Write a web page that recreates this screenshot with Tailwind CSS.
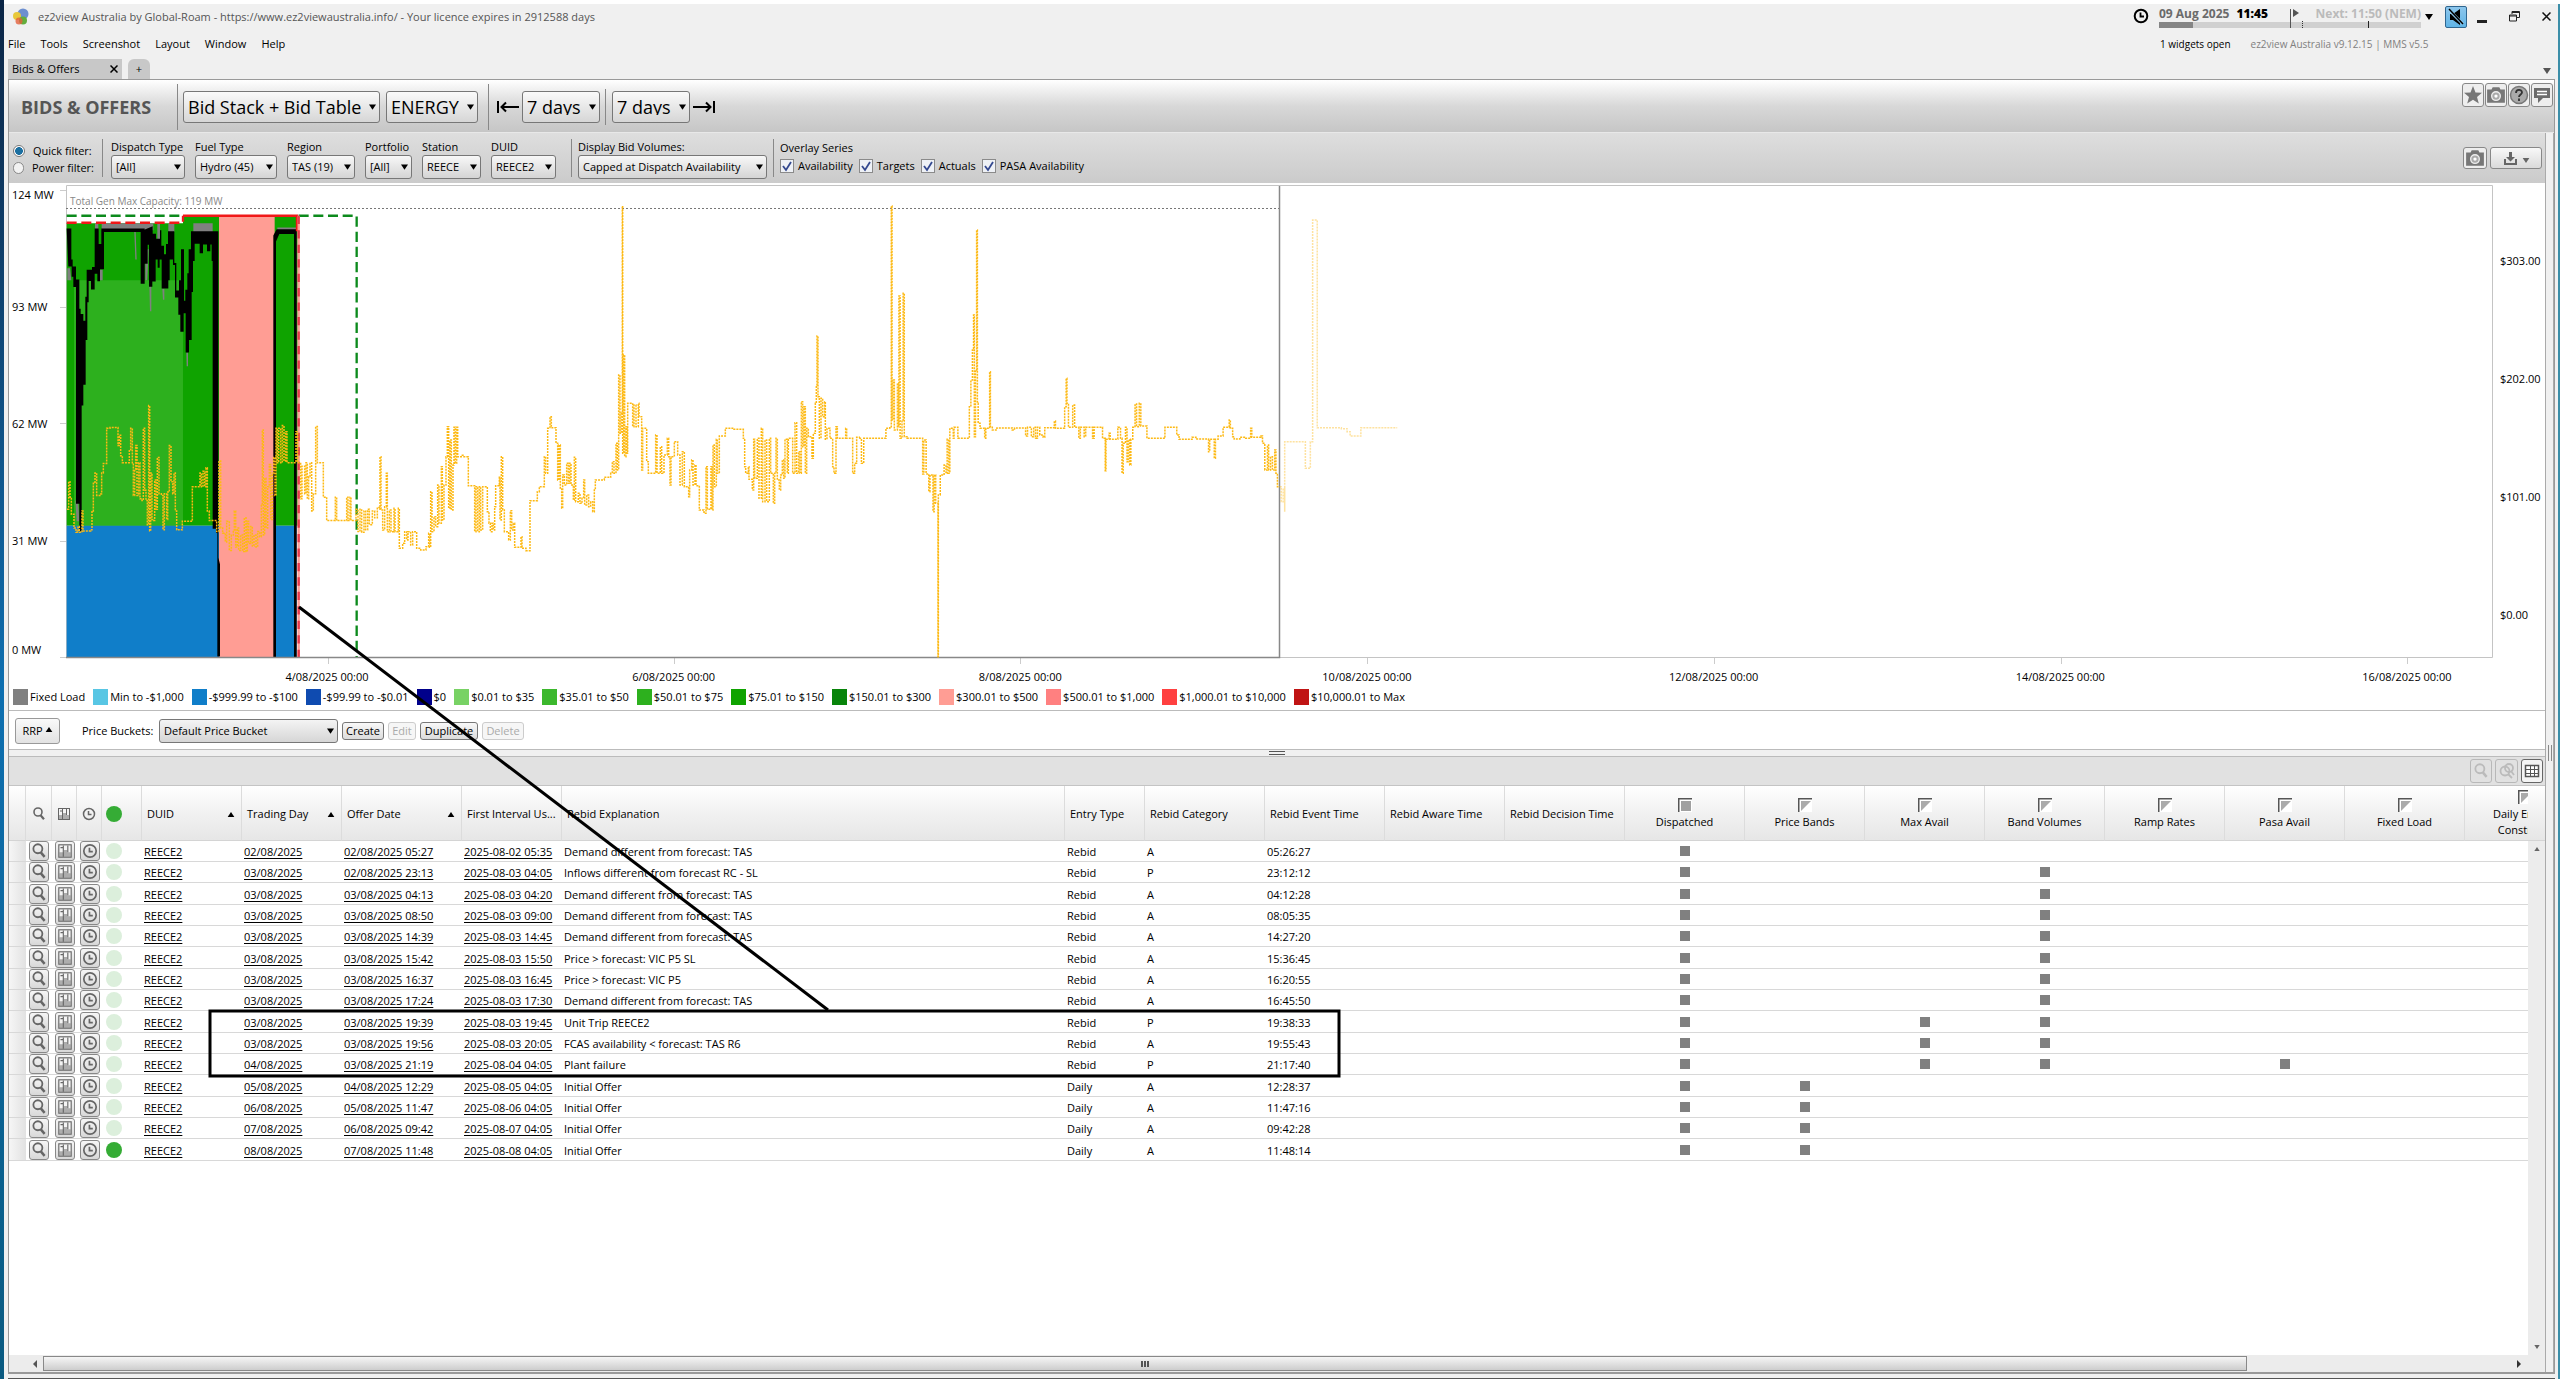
<!DOCTYPE html>
<html lang="en">
<head>
    <meta charset="UTF-8">
    <meta name="viewport" content="width=device-width, initial-scale=1.0">
    <title>ez2view Australia - Bids &amp; Offers</title>
    <script src="https://cdn.jsdelivr.net/npm/@tailwindcss/browser@4"></script>
</head>
<body class="relative flex h-screen overflow-hidden bg-white font-['Open_Sans',sans-serif] text-[11px] leading-4 text-black">

    <!-- icon sprite -->
    <svg class="hidden">
        <symbol id="caret" viewBox="0 0 8 6"><path d="M0 0h8L4 6z"/></symbol>
        <symbol id="caret-up" viewBox="0 0 8 6"><path d="M0 6h8L4 0z"/></symbol>
        <symbol id="magnifier" viewBox="0 0 16 16"><circle cx="7" cy="6" r="4" fill="none" stroke="currentColor" stroke-width="1.6"/><path d="M9.6 9.2l3.4 4" stroke="currentColor" stroke-width="2.2"/></symbol>
        <symbol id="bars" viewBox="0 0 16 16"><rect x="2.5" y="2.500" width="11" height="11" fill="#f4f4f4" stroke="currentColor"/><path d="M3 9h4v4H3zM7 7h3v6H7zM10 9h3v4h-3z" fill="currentColor" opacity=".5"/><path d="M6.500 3v10M10.500 3v6M4 5h2" stroke="currentColor"/></symbol>
        <symbol id="clock" viewBox="0 0 16 16"><circle cx="8" cy="8" r="5.500" fill="none" stroke="currentColor" stroke-width="1.500"/><path d="M7.500 5v3.500h3" fill="none" stroke="currentColor" stroke-width="1.500"/></symbol>
        <symbol id="camera" viewBox="0 0 18 18"><path fill-rule="evenodd" d="M1 4h4l1-2h6l1 2h4v12H1zM9 5.500a4.500 4.500 0 100 9 4.500 4.500 0 000-9z"/><circle cx="9" cy="10" r="3.300" fill="#aaa"/><circle cx="9" cy="10" r="1.500" fill="#fff"/></symbol>
        <symbol id="corner" viewBox="0 0 14 14"><path fill="#fff" d="M0 0h14v14H0z"/><path d="M3 3h10L3 13z" fill="#aaa"/><path d="M.75 14V.75H14" fill="none" stroke="#555" stroke-width="1.500"/></symbol>
        <symbol id="corner-full" viewBox="0 0 14 14"><path fill="#fff" d="M0 0h14v14H0z"/><path d="M3 3h10v10H3z" fill="#a0a0a0"/><path d="M.75 14V.75H14" fill="none" stroke="#555" stroke-width="1.500"/></symbol>
    </svg>

    <div class="w-1 shrink-0 bg-linear-to-b from-[#0b2545] via-[#0e6fb0] to-[#0a5a80]"></div>

    <div class="mt-1 flex min-w-0 flex-1 flex-col border-r-2 border-[#3b8ea8] bg-[#f0f0f0] pr-[3px] pl-1">

        <!-- title, menu and tabs -->
        <header class="flex h-[75px] shrink-0 justify-between">
            <div class="flex flex-col">
                <div class="flex h-[26px] items-center gap-2 pl-1 text-[#555]">
                    <svg class="size-[18px]" viewBox="0 0 18 18"><circle cx="11" cy="6" r="5.500" fill="#6d8fd0"/><circle cx="5" cy="8" r="4" fill="#e7c83b"/><circle cx="11" cy="12.500" r="4" fill="#63ad3c"/><circle cx="7" cy="13" r="3.500" fill="#e4603c" opacity=".8"/></svg>
                    <span>ez2view Australia by Global-Roam - https://www.ez2viewaustralia.info/ - Your licence expires in 2912588 days</span>
                </div>
                <nav class="flex h-[28px] items-center gap-[15px]">
                    <button>File</button><button>Tools</button><button>Screenshot</button><button>Layout</button><button>Window</button><button>Help</button>
                </nav>
                <div class="flex flex-1 items-stretch gap-1.5 pt-px">
                    <div class="flex w-[114px] items-center justify-between bg-[#c8c8c8] pr-1 pl-1">
                        <span>Bids &amp; Offers</span>
                        <button aria-label="Close tab"><svg class="size-2" viewBox="0 0 8 8"><path d="M.5.5l7 7M7.500.5l-7 7" stroke="#000" stroke-width="1.500"/></svg></button>
                    </div>
                    <button class="w-[22px] rounded-t-md bg-[#c8c8c8]">+</button>
                </div>
            </div>
            <div class="flex flex-col">
                <div class="flex items-start">
                    <svg class="mt-1 mr-2.5 size-4" viewBox="0 0 16 16"><circle cx="8" cy="8" r="6.300" fill="none" stroke="#000" stroke-width="2"/><path d="M7.500 4.500v4h3.500" fill="none" stroke="#000" stroke-width="1.800"/></svg>
                    <div class="relative w-[262px]">
                        <div class="flex h-[18px] items-end justify-between font-bold text-[#bbb]">
                            <span class="text-[12px] text-[#6b6b6b]">09 Aug 2025 <b class="ml-1 text-black">11:45</b></span>
                            <span class="text-[12px]">Next: 11:50 (NEM)</span>
                        </div>
                        <div class="h-[6px] bg-[#d0d0d0]"><div class="h-full w-[34px] bg-[#858585]"></div></div>
                        <svg class="absolute inset-0 h-6 w-full" viewBox="0 0 262 24"><path d="M131.500 5v19" stroke="#555"/><path d="M134 5l6 4-6 4z" fill="#555"/><path d="M143.500 17v7" stroke="#333" stroke-dasharray="1 1"/><path d="M209.500 17v7" stroke="#222"/></svg>
                    </div>
                    <svg class="mt-2.5 mr-3 ml-1 h-1.5 w-2"><use href="#caret"/></svg>
                    <button aria-label="Mute" class="mt-0.5 mr-2.5 rounded-xs border border-[#2f6690] bg-linear-to-b from-[#8cc6ec] to-[#5fb4e6] p-px">
                        <svg class="size-[18px]" viewBox="0 0 18 18"><path d="M3 6h3l7-5v16l-7-5H3z"/><path d="M2 2l14 14" stroke="#8cc6ec" stroke-width="3"/><path d="M2 1l14 15" stroke="#000" stroke-width="1.500"/></svg>
                    </button>
                    <button aria-label="Minimise" class="mt-4 mr-[22px] h-[3px] w-[10px] bg-[#222]"></button>
                    <button aria-label="Restore" class="mt-[7px] mr-[22px]"><svg class="size-[11px]" viewBox="0 0 11 11" fill="none" stroke="#222"><path d="M.5 4h7v6h-7zM.5 5h7M3 3V.5h7.500v6H8M3 1.500h7"/></svg></button>
                    <button aria-label="Close" class="mt-2 mr-1"><svg class="size-[9px]" viewBox="0 0 9 9"><path d="M.5.5l8 8M8.500.5l-8 8" stroke="#111" stroke-width="1.500"/></svg></button>
                </div>
                <div class="mt-2 flex gap-5 pl-[27px] text-[10px]">
                    <span>1 widgets open</span><span class="text-[#808080]">ez2view Australia v9.12.15 | MMS v5.5</span>
                </div>
                <svg class="mt-auto mr-1 mb-[5px] h-1.5 w-2 self-end" fill="#555"><use href="#caret"/></svg>
            </div>
        </header>

        <main class="flex min-h-0 flex-1 flex-col border border-b-2 border-[#999]">

            <!-- widget header -->
            <div class="flex h-[53px] shrink-0 items-center border-b border-[#e8e8e8] bg-linear-to-b from-white via-[#d8d8d8] to-[#c6c6c6] pt-px pl-3 text-[18px]">
                <h1 class="w-[156px] text-[18px] font-bold text-[#555]">BIDS &amp; OFFERS</h1>
                <div class="mr-[5px] h-[46px] w-px bg-[#888]"></div>
                <div class="relative mr-1.5">
                    <select aria-label="View" class="h-8 w-[197px] appearance-none rounded-[3px] border border-[#777] bg-linear-to-b from-[#fafafa] to-[#d6d6d6] px-1"><option>Bid Stack + Bid Table</option></select>
                    <svg class="pointer-events-none absolute top-[13px] right-1 h-1.5 w-[7px]"><use href="#caret"/></svg>
                </div>
                <div class="relative mr-[10px]">
                    <select aria-label="Market" class="h-8 w-[92px] appearance-none rounded-[3px] border border-[#777] bg-linear-to-b from-[#fafafa] to-[#d6d6d6] px-1"><option>ENERGY</option></select>
                    <svg class="pointer-events-none absolute top-[13px] right-1 h-1.5 w-[7px]"><use href="#caret"/></svg>
                </div>
                <div class="mr-2 h-[46px] w-px bg-[#888]"></div>
                <button aria-label="Back" class="mr-[3px]"><svg class="h-3 w-[22px]" viewBox="0 0 22 12" fill="none" stroke="#000" stroke-width="2"><path d="M1 0v12M4 6h18M9 1.500L4.500 6 9 10.500"/></svg></button>
                <div class="relative mr-[5px]">
                    <select aria-label="Days before" class="h-8 w-[78px] appearance-none rounded-[3px] border border-[#777] bg-linear-to-b from-[#fafafa] to-[#d6d6d6] px-1"><option>7 days</option></select>
                    <svg class="pointer-events-none absolute top-[13px] right-1 h-1.5 w-[7px]"><use href="#caret"/></svg>
                </div>
                <div class="mr-1.5 h-9 w-px bg-[#888]"></div>
                <div class="relative mr-[3px]">
                    <select aria-label="Days after" class="h-8 w-[78px] appearance-none rounded-[3px] border border-[#777] bg-linear-to-b from-[#fafafa] to-[#d6d6d6] px-1"><option>7 days</option></select>
                    <svg class="pointer-events-none absolute top-[13px] right-1 h-1.5 w-[7px]"><use href="#caret"/></svg>
                </div>
                <button aria-label="Forward"><svg class="h-3 w-[22px]" viewBox="0 0 22 12" fill="none" stroke="#000" stroke-width="2"><path d="M21 0v12M18 6H0M13 1.500L17.500 6 13 10.500"/></svg></button>

                <div class="mt-0.5 mr-px ml-auto flex gap-px self-start text-[#777]">
                    <button aria-label="Favourite" class="rounded-[3px] border border-[#888] bg-[#eee] py-px"><svg class="size-5" viewBox="0 0 20 20" fill="currentColor"><path d="M10 1l2.500 6.500 6.500.2-5 4.200 1.800 6.600L10 14.700l-5.800 3.800L6 11.900 1 7.700l6.500-.2z"/></svg></button>
                    <button aria-label="Snapshot" class="rounded-[3px] border border-[#888] bg-[#eee] py-px"><svg class="size-5" fill="currentColor"><use href="#camera"/></svg></button>
                    <button aria-label="Help" class="rounded-[3px] border border-[#888] bg-[#eee] py-px"><svg class="size-5" viewBox="0 0 20 20"><circle cx="10" cy="10" r="8.500" fill="#aaa" stroke="#777" stroke-width="1.500"/><path d="M7 8c0-4 6-4 6-.5 0 2-3 2-3 4.500M10 13.500V16" fill="none" stroke="#333" stroke-width="1.800"/></svg></button>
                    <button aria-label="Comments" class="rounded-[3px] border border-[#888] bg-[#eee] py-px"><svg class="size-5" viewBox="0 0 20 20"><path d="M2 3h16v10h-7l-5 5v-5H2z" fill="#6c6c6c"/><path d="M5 6.500h10M5 9.500h10" stroke="#fff" stroke-width="1.500"/></svg></button>
                </div>
            </div>

            <div class="flex min-h-0 flex-1">
                <div class="flex min-w-0 flex-1 flex-col bg-white">

                    <!-- filters -->
                    <div class="flex h-[50px] shrink-0 items-start bg-linear-to-b from-[#dedede] to-[#cbcbcb] pt-1.5 pl-1">
                        <div class="mr-2 flex w-[81px] flex-col gap-px pt-1 whitespace-nowrap">
                            <label class="flex items-center gap-2"><input type="radio" name="filter" checked class="size-3 appearance-none rounded-full border border-[#777] bg-white bg-radial from-[#1b6fa0] from-50% to-white to-60%">Quick filter:</label>
                            <label class="flex items-center gap-2"><input type="radio" name="filter" class="size-3 appearance-none rounded-full border border-[#888] bg-[#f2f2f2]">Power filter:</label>
                        </div>
                        <div class="mr-2 h-[38px] w-px bg-[#888]"></div>
                        <div class="flex gap-[10px]">
                            <label class="relative flex flex-col">Dispatch Type
                                <select class="h-6 w-[74px] appearance-none rounded-[3px] border border-[#777] bg-linear-to-b from-[#f8f8f8] to-[#d4d4d4] px-1"><option>[All]</option></select>
                                <svg class="pointer-events-none absolute right-1 bottom-[9px] h-1.5 w-[7px]"><use href="#caret"/></svg></label>
                            <label class="relative flex flex-col">Fuel Type
                                <select class="h-6 w-[82px] appearance-none rounded-[3px] border border-[#777] bg-linear-to-b from-[#f8f8f8] to-[#d4d4d4] px-1"><option>Hydro (45)</option></select>
                                <svg class="pointer-events-none absolute right-1 bottom-[9px] h-1.5 w-[7px]"><use href="#caret"/></svg></label>
                            <label class="relative flex flex-col">Region
                                <select class="h-6 w-[68px] appearance-none rounded-[3px] border border-[#777] bg-linear-to-b from-[#f8f8f8] to-[#d4d4d4] px-1"><option>TAS (19)</option></select>
                                <svg class="pointer-events-none absolute right-1 bottom-[9px] h-1.5 w-[7px]"><use href="#caret"/></svg></label>
                            <label class="relative flex flex-col">Portfolio
                                <select class="h-6 w-[47px] appearance-none rounded-[3px] border border-[#777] bg-linear-to-b from-[#f8f8f8] to-[#d4d4d4] px-1"><option>[All]</option></select>
                                <svg class="pointer-events-none absolute right-1 bottom-[9px] h-1.5 w-[7px]"><use href="#caret"/></svg></label>
                            <label class="relative flex flex-col">Station
                                <select class="h-6 w-[59px] appearance-none rounded-[3px] border border-[#777] bg-linear-to-b from-[#f8f8f8] to-[#d4d4d4] px-1"><option>REECE</option></select>
                                <svg class="pointer-events-none absolute right-1 bottom-[9px] h-1.5 w-[7px]"><use href="#caret"/></svg></label>
                            <label class="relative flex flex-col">DUID
                                <select class="h-6 w-[65px] appearance-none rounded-[3px] border border-[#777] bg-linear-to-b from-[#f8f8f8] to-[#d4d4d4] px-1"><option>REECE2</option></select>
                                <svg class="pointer-events-none absolute right-1 bottom-[9px] h-1.5 w-[7px]"><use href="#caret"/></svg></label>
                        </div>
                        <div class="mr-1.5 ml-[15px] h-[38px] w-px bg-[#888]"></div>
                        <label class="relative flex flex-col">Display Bid Volumes:
                            <select class="h-6 w-[189px] appearance-none rounded-[3px] border border-[#777] bg-linear-to-b from-[#f8f8f8] to-[#d4d4d4] px-1"><option>Capped at Dispatch Availability</option></select>
                            <svg class="pointer-events-none absolute right-1 bottom-[9px] h-1.5 w-[7px]"><use href="#caret"/></svg></label>
                        <div class="mr-1.5 ml-1.5 h-[38px] w-px bg-[#888]"></div>
                        <fieldset>
                            <legend class="pt-px">Overlay Series</legend>
                            <div id="overlays" class="flex gap-1.5 pt-0.5"></div>
                        </fieldset>
                        <div class="mt-2 mr-[3px] ml-auto flex gap-[3px] text-[#777]">
                            <button aria-label="Chart snapshot" class="h-[22px] rounded-[3px] border border-[#888] bg-[#eee] px-px"><svg class="size-5" fill="currentColor"><use href="#camera"/></svg></button>
                            <button aria-label="Download" class="flex h-[22px] w-[52px] items-center justify-center gap-1 rounded-[3px] border border-[#888] bg-linear-to-b from-[#f8f8f8] to-[#dadada]"><svg class="size-[15px]" viewBox="0 0 15 15" fill="#666"><path d="M6 1h3v5h3L7.500 10.500 3 6h3zM1 8h2v4h9V8h2v6H1z"/></svg><svg class="mt-1 h-[5px] w-2" fill="#666"><use href="#caret"/></svg></button>
                        </div>
                    </div>

                    <!-- bid stack chart -->
                    <section class="flex shrink-0 flex-col border-b border-[#bbb] pt-0.5">
                        <div class="flex">
                            <div class="flex w-[57px] flex-col pl-[3px] leading-5">
                                <span>124 MW</span><span class="mt-[92px]">93 MW</span><span class="mt-[97px]">62 MW</span><span class="mt-[97px]">31 MW</span><span class="mt-[89px]">0 MW</span>
                            </div>
                            <div class="relative h-[482px] min-w-0 flex-1">
                                <span class="absolute top-2 left-1 text-[10px] text-[#888]">Total Gen Max Capacity: 119 MW</span>
                                <svg class="h-full w-full overflow-visible" viewBox="66 185 2427 482" preserveAspectRatio="none" fill="none">
                                    <path d="M66.500 657.500V185.500H2492.500V657.500H66" stroke="#c4c4c4"/>
                                    <path d="M60 190.500h6M60 307.500h6M60 423.500h6M60 541.500h6M60 657.500h6M328.500 658v6M674.500 658v6M1020.500 658v6M1367.500 658v6M1714.500 658v6M2061.500 658v6M2407.500 658v6" stroke="#ccc"/>
                                    <path d="M66 208.500H1279" stroke="#777" stroke-dasharray="2 2"/>
                                    <g transform="translate(0 170) scale(.33333 .34435)">
                                        <!-- volume bands -->
                                        <path fill="#0fa300" d="M200 155h349V133h344V1033H200z"/>
                                        <path fill="#2db01e" d="M222 320h327V1033H222z"/>
                                        <path fill="#107ec9" d="M200 1033h690V1414H200z"/>
                                        <path fill="#ff9d94" d="M657 134h167V1414H657z"/>
                                        <!-- targets -->
                                        <path fill="#808080" d="M285 155h10v20h-10zM305 155h155v20H305zM472 155h8v50h-8zM505 155h18v25h-18zM580 155h58v25h-58zM832 167h56v12h-56zM403 180h4l3 80h-4zM436 230h10l-4 90h-6zM448 330h6v80h-4zM487 345h6v32h-4zM559 530h5v40h-4zM202 285h8l4 35h-12zM300 290h8v30h-8zM226 960h8l4 60h-8z"/>
                                        <!-- actuals -->
                                        <path fill="#000" d="M200 170h14v90h4v20h10v38h10v85h4v15h8v20h6v-70h4v-78h16v-8h8V170h12v45h8v-45h130v10H312v108h-12v35h-8v-22h-8v46h-11v-25h-7v62h-4v110h-5v130h-7v60h-5v365h-7v-80h-10V340h-8v-30h-5v-30h-10z"/>
                                        <path fill="#000" d="M422 178v152h12v-58h9v-55h4v122h10v-15h10v-64h6v24h6v-24h6v84h20v-24h4v-60h10v16h6v94h10v50h6v50h10v-54h6v114h10v-36h8v-140h4v-90h5v-50h15v28h10v-26h12v20h10v-20h4v48h3v778h10v12h4v359h8V1145l-5-20V178h-82v52h-7v70h-4v48h-6v32h-4V230h-9v90h-6v30h-8v-80h-6v-92h-19v37h-6v30h-6v-25h-8v-45h-4v25h-12v-15h-10v-22z"/>
                                        <path fill="#000" d="M820 190l10-18h60V1414h-8V186h-44l-10 22V1414h-8z"/>
                                        <!-- availability and PASA -->
                                        <g stroke-width="7">
                                            <path d="M200 133h349M896 133h174V1414" stroke="#0c8a1c" stroke-dasharray="30 14"/>
                                            <path d="M200 153h349v-20" stroke="#f01818" stroke-dasharray="30 14"/>
                                            <path d="M549 133h342v45" stroke="#f01818"/>
                                            <path d="M896 133v1281" stroke="#ff9d94"/>
                                            <path d="M896 133v1281" stroke="#e8384a" stroke-dasharray="24 18"/>
                                        </g>
                                    </g>
                                    <path d="M66 657.500H1279.500V186" stroke="#888" stroke-width="1.500"/>
                                    <!-- RRP -->
                                    <g stroke="#fdb913" stroke-width="1.500" stroke-dasharray="2 1">
                                        <path vector-effect="non-scaling-stroke" transform="translate(0 170) scale(.33333 .34435)" d="M201 985H206V905H210V950H214V1000H222V1040H228V1052H234V1035H238V1052H246V990H249V1048H272V1045H276V990H280V910H285V880H290V945H303V940H305V880H310V852H320V750H330V748H354V800H358V770H362V830H367V850H388V815H392V750H397V850H400V945H404V870H407V800H411V945H416V850H420V955H426V960H430V750H434V930H438V960H442V1030H446V684H449V1048H452V880H456V1015H461V1018H464V900H468V985H472V835H477V940H484V945H489V1045H493V940H500V1015H503V935H508V800H513V905H518V940H522V880H526V990H530V1045H547V1020H577V920H600V880H604V920H609V875H614V920H618V865H622V990H628V1018H650V1050H657V845H662V1040H668V1055H676V1080H680V1020H688V1105H694V1060H700V1050H703V990H707V1095H712V1040H716V1105H722V1060H728V1108H733V1010H738V1108H742V1020H746V1085H752V1035H757V1092H762V1060H768V1095H773V1050H779V1065H784V970H787V755H790V1060H794V895H798V1040H803V920H808V855H812V1015H817V880H821V835H825V945H828V750H832V850H836V750H842V850H847V742H852V845H857V760H861V850H888V760H893V850H902V955H906V860H914V940H918V850H922V955H926V890H930V850H935V990H940V940H947V745H952V850H970V950H980V1018H1006V950H1010V1018H1040V950H1044V1018H1050V950H1053V1018H1068V985H1074V1050H1080V985H1085V1052H1092V990H1097V1045H1103V985H1108V1030H1117V990H1124V1010H1132V980H1140"/>
                                        <path vector-effect="non-scaling-stroke" transform="translate(380 190) scale(.33333)" d="M0 960V800H3V960H8V1020H14V950H19V850H22V1025H28V960H33V1025H42V955H45V1025H55V955H58V1075H68V1060H74V1025H80V1050H84V1025H92V1065H98V1025H110V1075H122V1080H138V1070H146V1030H149V1072H152V905H156V1025H162V980H167V1010H173V885H177V1000H184V830H187V990H192V885H198V800H202V710H206V955H210V750H214V960H219V825H222V712H226V820H230V712H233V800H247V796H252V800H265V887H284V1025H288V890H293V1025H298V890H302V1020H308V890H322V965H327V1000H331V1025H336V1000H340V1020H344V950H347V887H358V862H360V990H364V800H368V960H373V1025H386V1050H391V962H395V1020H400V1000H404V1072H423V1040H426V1075H438V1082H450V932H472V905H478V890H493V800H497V850H503V715H510V680H514V713H528V760H533V870H537V765H541V895H545V955H548V855H553V885H560V820H565V880H569V820H573V885H580V930H583V802H587V935H595V910H600V940H606V925H611V870H614V945H620V915H626V950H632V935H638V965H643V900H646V870H673V862H692V850H697V815H702V850H708V760H712V840H716V555H720V730H724V670H727V48H728V790H731V495H734V800H738V710H741V790H743V640H758V710H762V645H768V710H775V640H777V680H785V840H788V715H800V815H805V850H827V735H831V850H841V770H845V850H852V795H862V745H866V800H870V885H873V800H883V755H893V795H900V885H907V785H913V890H926V920H929V840H935V810H939V885H945V825H948V887H958V960H972V970H978V830H982V958H993V830H996V960H999V765H1003V890H1009V748H1012V850H1018V738H1036V715H1062V718H1090V745H1094V830H1097V850H1105V830H1107V868H1117V900H1121V748H1124V865H1132V745H1137V925H1144V715H1148V935H1155V750H1160V935H1168V745H1172V850H1180V940H1184V850H1188V745H1192V870H1198V900H1202V855H1207V810H1211V865H1215V748H1222V850H1225V745H1238V850H1245V698H1250V850H1256V785H1260V850H1264V635H1268V770H1272V650H1276V850H1280V715H1285V740H1296V805H1300V730H1306V640H1309V585H1311V438H1314V620H1318V745H1323V625H1328V680H1334V635H1336V748H1341V715H1350V745H1358V830H1362V850H1368V710H1372V745H1397V715H1400V745H1418V850H1424V820H1430V742H1440"/>
                                        <path vector-effect="non-scaling-stroke" transform="translate(840 190) scale(.38270 .33333)" d="M50 745H56V820H62V745H120V715H130V710H134V48H136V690H139V570H142V720H150V580H152V710H154V318H157V745H162V690H165V310H168V740H175V745H216V852H219V750H225V852H232V905H235V855H243V965H246V855H250V940H256V1400H257V915H262V855H272V825H277V850H280V748H284V850H287V715H296V745H298V712H308V745H338V650H342V570H346V480H349V375H351V740H354V540H357V120H359V640H361V700H366V715H378V745H381V715H391V545H393V712H398V720H410V714H450V720H456V714H485V738H490V712H500V740H506V712H511V745H516V712H522V735H531V742H535V713H560V693H563V715H587V650H591V565H593V640H597V712H608V645H613V712H624V745H628V712H638V740H642V712H660V745H664V712H686V745H693V842H695V748H703V730H706V748H726V712H733V745H737V850H740V760H746V712H750V815H753V750H757V825H760V748H765V712H771V642H775V710H782V640H786V708H802V745H849V712H880V735H886V748H920V742H930V747H963V785H966V748H978V805H981V748H988V738H1001V712H1017V690H1020V715H1026V740H1030V747H1045V742H1060V745H1073V715H1076V742H1100V738H1104V760H1110V840H1117V765H1120V840H1125V800H1130V840H1136V780H1139V850H1143V890H1148"/>
                                        <path opacity=".4" vector-effect="non-scaling-stroke" transform="translate(840 190) scale(.38270 .33333)" d="M1148 890H1153V935H1158V895H1162V965V755H1216V835H1229V755H1235V90H1247V713H1310V716H1325V725H1333V738H1361V713H1456"/>
                                    </g>
                                </svg>
                            </div>
                            <div class="flex w-[52px] flex-col gap-[98px] pt-[66px] pl-[7px] leading-5">
                                <span>$303.00</span><span>$202.00</span><span>$101.00</span><span>$0.00</span>
                            </div>
                        </div>
                        <div class="flex justify-between pr-[90px] pl-[270px] text-center leading-5">
                            <span class="w-24">4/08/2025 00:00</span><span class="w-24">6/08/2025 00:00</span><span class="w-24">8/08/2025 00:00</span><span class="w-24">10/08/2025 00:00</span><span class="w-24">12/08/2025 00:00</span><span class="w-24">14/08/2025 00:00</span><span class="w-24">16/08/2025 00:00</span>
                        </div>
                        <div id="legend" class="flex gap-2 pt-0.5 pb-[5px] pl-1"></div>
                    </section>

                    <!-- price buckets -->
                    <div class="flex h-[38px] shrink-0 items-center gap-1 pt-0.5 pl-1.5">
                        <button class="mr-[18px] flex h-[26px] w-[45px] items-center justify-center gap-0.5 rounded-[3px] border border-[#999] bg-linear-to-b from-[#fafafa] to-[#e2e2e2]">RRP<svg class="mb-1 h-[5px] w-2"><use href="#caret-up"/></svg></button>
                        <label for="bucket" class="w-[73px]">Price Buckets:</label>
                        <div class="relative">
                            <select id="bucket" class="h-6 w-[179px] appearance-none rounded-[3px] border border-[#777] bg-linear-to-b from-[#f4f4f4] to-[#d6d6d6] px-1"><option>Default Price Bucket</option></select>
                            <svg class="pointer-events-none absolute top-[9px] right-1 h-1.5 w-[7px]"><use href="#caret"/></svg>
                        </div>
                        <button class="h-[18px] w-[42px] rounded-[3px] border border-[#777] bg-linear-to-b from-[#f8f8f8] to-[#dcdcdc]">Create</button>
                        <button disabled class="h-[18px] w-[28px] rounded-[3px] border border-[#ccc] bg-[#f6f6f6] text-[#aaa]">Edit</button>
                        <button class="h-[18px] w-[58px] rounded-[3px] border border-[#777] bg-linear-to-b from-[#f8f8f8] to-[#dcdcdc]">Duplicate</button>
                        <button disabled class="h-[18px] w-[42px] rounded-[3px] border border-[#ccc] bg-[#f6f6f6] text-[#aaa]">Delete</button>
                    </div>
                    <div class="flex h-2 shrink-0 items-center justify-center border-y border-[#bbb] bg-[#f0f0f0]"><div class="h-1 w-4 border-y border-[#555]"></div></div>
                    <div class="flex h-[29px] shrink-0 items-center justify-end gap-[3px] border-b border-[#c4c4c4] bg-[#e1e1e1] pr-0.5">
                        <button disabled aria-label="Find" class="rounded-[3px] border border-[#b8b8b8] p-px text-[#bbb]"><svg class="h-5 w-[18px]"><use href="#magnifier"/></svg></button>
                        <button disabled aria-label="Find all" class="rounded-[3px] border border-[#b8b8b8] p-px text-[#bbb]"><svg class="h-5 w-[19px]" viewBox="0 0 19 20" fill="none" stroke="currentColor" stroke-width="1.800"><circle cx="8" cy="10" r="4.500"/><circle cx="12" cy="7" r="4"/><path d="M11 13l4 4M14 10l3 4"/></svg></button>
                        <button aria-label="Columns" class="rounded-[3px] border border-[#666] bg-[#f4f4f4] p-px"><svg class="h-5 w-[18px]" viewBox="0 0 18 20" fill="none" stroke="#555"><path d="M2.500 4.500h13v11h-13z" fill="#fff" stroke-width="1.500"/><path d="M3 8.500h12M3 12.500h12M7.500 5v10M11.500 5v10"/></svg></button>
                    </div>

                    <!-- offers -->
                    <div class="flex min-h-0 flex-1">
                        <div class="min-w-0 flex-1 overflow-hidden">
                            <table class="w-[2576px] table-fixed border-separate border-spacing-0 text-left whitespace-nowrap">
                                <colgroup>
                                    <col class="w-[17px]"><col class="w-[26px]"><col class="w-[25px]"><col class="w-[25px]"><col class="w-[40px]">
                                    <col class="w-[100px]"><col class="w-[100px]"><col class="w-[120px]"><col class="w-[100px]"><col class="w-[503px]"><col class="w-[80px]">
                                    <col class="w-[120px]"><col class="w-[120px]"><col class="w-[120px]"><col class="w-[120px]">
                                    <col class="w-[120px]"><col class="w-[120px]"><col class="w-[120px]"><col class="w-[120px]"><col class="w-[120px]"><col class="w-[120px]"><col class="w-[120px]"><col class="w-[120px]">
                                </colgroup>
                                <thead><tr id="head" class="h-[55px] bg-linear-to-b from-white via-[#f1f1f1] to-[#e6e6e6]"></tr></thead>
                                <tbody id="rows"></tbody>
                            </table>
                        </div>
                        <div class="flex w-[17px] shrink-0 flex-col">
                            <div class="h-[55px] border-b border-[#d4d4d4] bg-linear-to-b from-white via-[#f1f1f1] to-[#e6e6e6]"></div>
                            <div class="flex flex-1 flex-col items-center justify-between bg-[#ececec] py-1.5">
                                <svg class="h-1 w-1.5" fill="#666"><use href="#caret-up"/></svg>
                                <svg class="h-1 w-1.5" fill="#666"><use href="#caret"/></svg>
                            </div>
                        </div>
                    </div>
                    <div class="flex h-[17px] shrink-0 items-center bg-[#ececec] pr-6 pl-6">
                        <svg class="mr-1.5 h-2 w-1" viewBox="0 0 4 8" fill="#555"><path d="M4 0v8L0 4z"/></svg>
                        <div class="mr-auto flex h-[15px] w-[88.6%] items-center justify-center gap-px border border-[#888] bg-linear-to-b from-[#f6f6f6] to-[#cdcdcd]">
                            <i class="h-1.5 w-0.5 bg-[#555]"></i><i class="h-1.5 w-0.5 bg-[#555]"></i><i class="h-1.5 w-0.5 bg-[#555]"></i>
                        </div>
                        <svg class="h-2 w-1" viewBox="0 0 4 8" fill="#333"><path d="M0 0v8l4-4z"/></svg>
                    </div>
                </div>
                <div class="flex w-[9px] shrink-0 items-center justify-center border-x border-[#aaa] bg-[#f0f0f0]"><div class="h-4 w-1 border-x border-[#888]"></div></div>
            </div>
        </main>
        <div class="h-[5px] shrink-0 border-b border-[#555]"></div>
    </div>

    <!-- call-out from the trip to its rebids -->
    <svg class="pointer-events-none absolute top-0 left-0 h-[1379px] w-[2560px]" fill="none" stroke="#000" stroke-width="3">
        <path d="M299 607L828 1010"/><rect x="210" y="1011" width="1129" height="65"/>
    </svg>

    <script>
        const overlays = ["Availability", "Targets", "Actuals", "PASA Availability"];
        document.getElementById("overlays").innerHTML = overlays.map((name) => `
            <label class="flex items-center gap-1"><span class="relative size-[14px]"><input type="checkbox" checked class="block size-[14px] appearance-none border border-[#8a8a8a] bg-[#eef1f6]">
            <svg class="pointer-events-none absolute inset-0 size-[14px]" viewBox="0 0 14 14"><path d="M3 7l3 4 5-8" fill="none" stroke="#33488f" stroke-width="1.800"/></svg></span>${name}</label>`).join("");

        const buckets = [
            ["#808080", "Fixed Load"], ["#58c6e4", "Min to -$1,000"], ["#107ec9", "-$999.99 to -$100"], ["#0f4bb0", "-$99.99 to -$0.01"],
            ["#00008b", "$0"], ["#78d264", "$0.01 to $35"], ["#3cb82d", "$35.01 to $50"], ["#2db01e", "$50.01 to $75"], ["#0fa300", "$75.01 to $150"],
            ["#08840a", "$150.01 to $300"], ["#ff9d94", "$300.01 to $500"], ["#ff8080", "$500.01 to $1,000"], ["#ff4040", "$1,000.01 to $10,000"], ["#c01414", "$10,000.01 to Max"]
        ];
        document.getElementById("legend").innerHTML = buckets.map(([colour, name]) =>
            `<span class="flex items-center"><i class="mr-0.5 h-4 w-[15px]" style="background:${colour}"></i>${name}</span>`).join("");

        const th = "border-r border-b border-r-[#dcdcdc] border-b-[#d4d4d4] pt-0.5 font-normal";
        const icon = (id) => `<th class="${th}"><svg class="mx-auto size-4 text-[#666]"><use href="#${id}"/></svg></th>`;
        const text = (name, sort) => `<th class="${th} pl-[5px]"><span class="flex items-center justify-between pr-1.5">${name}${sort ? '<svg class="h-[5px] w-2 shrink-0"><use href="#caret-up"/></svg>' : ""}</span></th>`;
        const flag = (name, id = "corner") => `<th class="${th} text-center"><svg class="mx-auto mb-0.5 size-[14px]"><use href="#${id}"/></svg>${name}</th>`;
        document.getElementById("head").innerHTML = `<th class="${th}"></th>` + icon("magnifier") + icon("bars") + icon("clock") +
            `<th class="${th}"><i class="ml-1 block size-4 rounded-full bg-[#35ac35]"></i></th>` +
            text("DUID", true) + text("Trading Day", true) + text("Offer Date", true) + text("First Interval Us...") + text("Rebid Explanation") +
            text("Entry Type") + text("Rebid Category") + text("Rebid Event Time") + text("Rebid Aware Time") + text("Rebid Decision Time") +
            flag("Dispatched", "corner-full") + ["Price Bands", "Max Avail", "Band Volumes", "Ramp Rates", "Pasa Avail", "Fixed Load", "Daily Energy<br>Constraint"].map((n) => flag(n)).join("");

        // trading day, offer date, first interval, explanation, type, category, event time, changed columns
        const offers = [
            ["02/08/2025", "02/08/2025 05:27", "2025-08-02 05:35", "Demand different from forecast: TAS", "Rebid", "A", "05:26:27", "D"],
            ["03/08/2025", "02/08/2025 23:13", "2025-08-03 04:05", "Inflows different from forecast RC - SL", "Rebid", "P", "23:12:12", "DB"],
            ["03/08/2025", "03/08/2025 04:13", "2025-08-03 04:20", "Demand different from forecast: TAS", "Rebid", "A", "04:12:28", "DB"],
            ["03/08/2025", "03/08/2025 08:50", "2025-08-03 09:00", "Demand different from forecast: TAS", "Rebid", "A", "08:05:35", "DB"],
            ["03/08/2025", "03/08/2025 14:39", "2025-08-03 14:45", "Demand different from forecast: TAS", "Rebid", "A", "14:27:20", "DB"],
            ["03/08/2025", "03/08/2025 15:42", "2025-08-03 15:50", "Price &gt; forecast: VIC P5 SL", "Rebid", "A", "15:36:45", "DB"],
            ["03/08/2025", "03/08/2025 16:37", "2025-08-03 16:45", "Price &gt; forecast: VIC P5", "Rebid", "A", "16:20:55", "DB"],
            ["03/08/2025", "03/08/2025 17:24", "2025-08-03 17:30", "Demand different from forecast: TAS", "Rebid", "A", "16:45:50", "DB"],
            ["03/08/2025", "03/08/2025 19:39", "2025-08-03 19:45", "Unit Trip REECE2", "Rebid", "P", "19:38:33", "DMB"],
            ["03/08/2025", "03/08/2025 19:56", "2025-08-03 20:05", "FCAS availability &lt; forecast: TAS R6", "Rebid", "A", "19:55:43", "DMB"],
            ["04/08/2025", "03/08/2025 21:19", "2025-08-04 04:05", "Plant failure", "Rebid", "P", "21:17:40", "DMBA"],
            ["05/08/2025", "04/08/2025 12:29", "2025-08-05 04:05", "Initial Offer", "Daily", "A", "12:28:37", "DP"],
            ["06/08/2025", "05/08/2025 11:47", "2025-08-06 04:05", "Initial Offer", "Daily", "A", "11:47:16", "DP"],
            ["07/08/2025", "06/08/2025 09:42", "2025-08-07 04:05", "Initial Offer", "Daily", "A", "09:42:28", "DP"],
            ["08/08/2025", "07/08/2025 11:48", "2025-08-08 04:05", "Initial Offer", "Daily", "A", "11:48:14", "DP"]
        ];
        const td = "border-b border-[#d8d8d8] p-0 pt-0.5 pl-0.5 leading-4";
        const button = (id, label) => `<td class="border-b border-[#d8d8d8] p-0"><button aria-label="${label}" class="mx-auto block h-5 w-5 rounded-[3px] border border-[#888] bg-linear-to-b from-[#f6f6f6] to-[#d8d8d8] text-[#666]"><svg class="h-[18px] w-[18px]"><use href="#${id}"/></svg></button></td>`;
        const link = (t) => `<td class="${td}"><a href="#" class="underline underline-offset-2">${t}</a></td>`;
        document.getElementById("rows").innerHTML = offers.map((o, i) => {
            const changed = o[7];
            return `<tr class="h-[21px] nth-[3n]:h-[22px]"><td class="border-b border-[#d8d8d8] bg-linear-to-r from-[#f6f6f6] to-[#e2e2e2]"></td>` +
                button("magnifier", "View offer") + button("bars", "Chart offer") + button("clock", "Go to time") +
                `<td class="border-b border-[#d8d8d8] p-0"><i class="ml-1 block size-4 rounded-full ${i === 14 ? "bg-[#35ac35]" : "bg-[#dcefdc]"}"></i></td>` +
                link("REECE2") + link(o[0]) + link(o[1]) + link(o[2]) +
                [o[3], o[4], o[5], o[6], "", ""].map((t) => `<td class="${td}">${t}</td>`).join("") +
                [..."DPMBRAFE"].map((c) => `<td class="border-b border-[#d8d8d8] p-0">${changed.includes(c) ? '<i class="mx-auto block size-[10px] bg-[#808080]"></i>' : ""}</td>`).join("") + "</tr>";
        }).join("");
    </script>
</body>
</html>
